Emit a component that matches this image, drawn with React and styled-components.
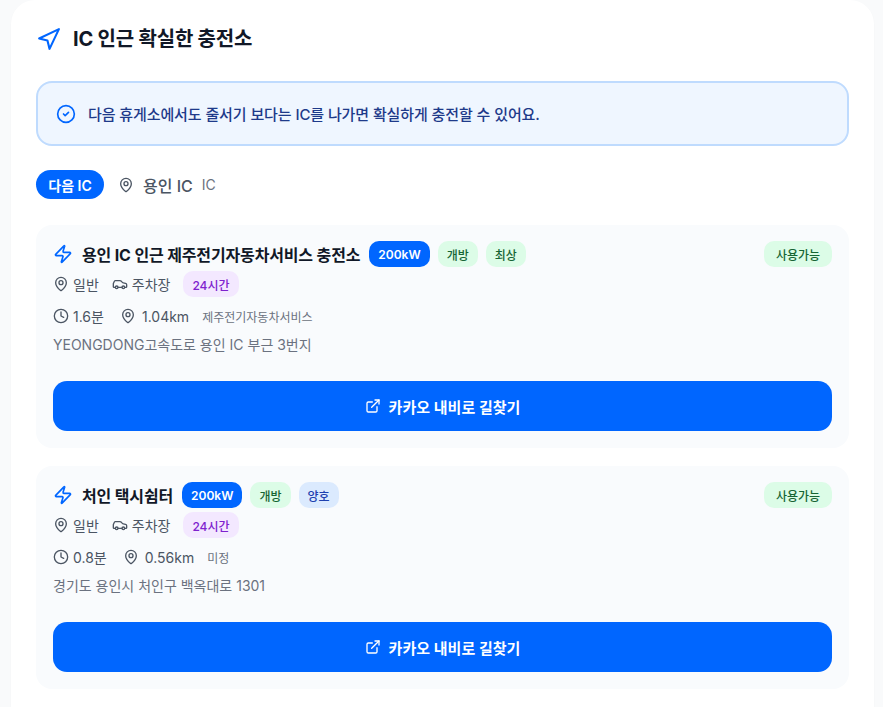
import React from "react";
import styled, { createGlobalStyle } from "styled-components";
import { Navigation, CircleCheck, MapPin, Zap, Car, Clock, ExternalLink } from "lucide-react";

const Global = createGlobalStyle`
  html, body { margin: 0; padding: 0; background: #f9fafb; height: 707px; overflow: hidden; }
  * { box-sizing: border-box; }
  body { font-family: Inter, "Noto Sans CJK KR", sans-serif; }
`;
const Page = styled.div`
  width: 883px; height: 707px; padding: 0 9px 0 11px; overflow: hidden;
`;
const Panel = styled.section`
  background: #fff; border-radius: 24px; padding: 25px 25px 24px; height: 760px;
  box-shadow: 0 1px 2px rgba(0,0,0,.03);
`;
const Heading = styled.div`
  display: flex; align-items: center; gap: 12px; height: 28px; margin-bottom: 28px;
  color: #0066ff;
`;
const HeadingText = styled.h2`
  margin: 0; font-size: 20px; line-height: 28px; font-weight: 700; color: #111827; letter-spacing: -0.2px;
`;
const Notice = styled.div`
  display: flex; align-items: center; gap: 12px; height: 65px; padding: 0 18px;
  background: #eff6ff; border: 2px solid #bfdbfe; border-radius: 16px; color: #0066ff;
  margin-bottom: 24px;
`;
const NoticeText = styled.span`
  font-size: 15px; font-weight: 500; color: #1e3a8a; letter-spacing: -0.1px;
`;
const NextRow = styled.div`
  display: flex; align-items: center; height: 29px; margin-bottom: 26px;
`;
const NextBadge = styled.span`
  display: inline-flex; align-items: center; justify-content: center; width: 68px; height: 29px;
  background: #0066ff; color: #fff; border-radius: 999px; font-size: 14px; font-weight: 600;
  margin-right: 14px;
`;
const NextName = styled.span`
  font-size: 16px; font-weight: 500; color: #4b5563; margin-left: 9px;
`;
const NextType = styled.span`
  font-size: 14px; color: #6b7280; margin-left: 9px;
`;
const PinGrey = styled(MapPin)`color: #4b5563;`;
const Station = styled.article`
  background: #f9fbfd; border-radius: 16px; padding: 16px 17px 17px; margin-bottom: 18px;
`;
const TitleRow = styled.div`
  display: flex; align-items: center; height: 26px; margin-bottom: 4px;
`;
const Bolt = styled(Zap)`color: #0066ff; margin-right: 9px; flex: none;`;
const Title = styled.h3`
  margin: 0 9px 0 0; font-size: 16px; font-weight: 700; color: #111827; letter-spacing: -0.15px;
`;
const Tag = styled.span`
  display: inline-flex; align-items: center; justify-content: center; height: 26px; padding: 0 ${p => p.$px ?? 9}px;
  border-radius: 10px; font-size: 12px; font-weight: ${p => p.$bold ? 600 : 500};
  background: ${p => p.$bg}; color: ${p => p.$fg}; margin-right: ${p => p.$mr ?? 8}px; flex: none;
`;
const Status = styled(Tag)`margin: 0 0 0 auto; width: 68px; padding: 0;`;
const MetaRow = styled.div`
  display: flex; align-items: center; height: 26px; color: #4b5563; font-size: 14px; margin-bottom: ${p => p.$mb ?? 6}px;
`;
const Meta = styled.span`
  display: inline-flex; align-items: center; gap: ${p => p.$gap ?? 4}px; margin-right: ${p => p.$mr ?? 13}px;
`;
const Small = styled.span`font-size: 12px; color: #6b7280;`;
const Address = styled.div`
  font-size: 14px; line-height: 20px; color: #6b7280; margin-bottom: 26px;
`;
const NavButton = styled.button`
  display: flex; align-items: center; justify-content: center; gap: 8px; width: 100%; height: 50px;
  border: 0; border-radius: 14px; background: #0066ff; color: #fff; font: 600 15px Inter, "Noto Sans CJK KR", sans-serif;
`;

const GREEN = { $bg: "#dcfce7", $fg: "#166534" };
const stations = [
  { title: "용인 IC 인근 제주전기자동차서비스 충전소", tags: [["개방", GREEN], ["최상", GREEN]], time: "1.6분", km: "1.04km", op: "제주전기자동차서비스", addr: "YEONGDONG고속도로 용인 IC 부근 3번지" },
  { title: "처인 택시쉼터", tags: [["개방", GREEN], ["양호", { $bg: "#dbeafe", $fg: "#1e40af" }]], time: "0.8분", km: "0.56km", op: "미정", addr: "경기도 용인시 처인구 백옥대로 1301" },
];

export default function App() {
  return (
    <Page>
      <Global />
      <Panel>
        <Heading>
          <Navigation size={25} strokeWidth={2} />
          <HeadingText>IC 인근 확실한 충전소</HeadingText>
        </Heading>
        <Notice>
          <CircleCheck size={20} strokeWidth={2} />
          <NoticeText>다음 휴게소에서도 줄서기 보다는 IC를 나가면 확실하게 충전할 수 있어요.</NoticeText>
        </Notice>
        <NextRow>
          <NextBadge>다음 IC</NextBadge>
          <PinGrey size={16} />
          <NextName>용인 IC</NextName>
          <NextType>IC</NextType>
        </NextRow>
        {stations.map(s => (
          <Station key={s.title}>
            <TitleRow>
              <Bolt size={20} />
              <Title>{s.title}</Title>
              <Tag $bg="#0066ff" $fg="#fff" $bold>200kW</Tag>
              {s.tags.map(([t, c]) => <Tag key={t} {...c}>{t}</Tag>)}
              <Status {...GREEN}>사용가능</Status>
            </TitleRow>
            <MetaRow $mb={6}>
              <Meta><MapPin size={16} />일반</Meta>
              <Meta><Car size={16} />주차장</Meta>
              <Tag $bg="#f3e8ff" $fg="#7e22ce">24시간</Tag>
            </MetaRow>
            <MetaRow $mb={6}>
              <Meta $gap={4} $mr={16}><Clock size={16} />{s.time}</Meta>
              <Meta $gap={6}><MapPin size={16} />{s.km}</Meta>
              <Small>{s.op}</Small>
            </MetaRow>
            <Address>{s.addr}</Address>
            <NavButton><ExternalLink size={16} />카카오 내비로 길찾기</NavButton>
          </Station>
        ))}
      </Panel>
    </Page>
  );
}
